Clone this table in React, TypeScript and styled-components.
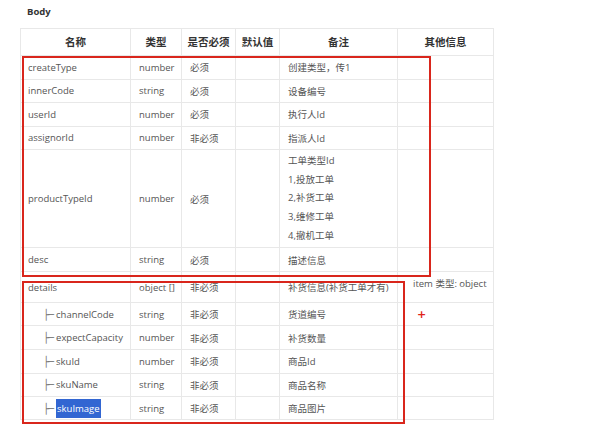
import React from "react";
import styled, { createGlobalStyle } from "styled-components";

const Global = createGlobalStyle`
  html, body { margin: 0; padding: 0; background: #fff; }
  body { font-family: "Open Sans", "Noto Sans CJK SC", sans-serif; }
`;

const Page = styled.div`
  position: relative;
  width: 598px;
  height: 436px;
  padding: 5px 0 0 20px;
  box-sizing: border-box;
  overflow: hidden;
`;

const Title = styled.div`
  font-family: "Open Sans", "Noto Sans CJK SC", sans-serif;
  font-weight: 700;
  font-size: 9.5px;
  color: #333;
  padding-left: 7px;
  height: 23px;
  line-height: 14px;
`;

const Table = styled.table`
  border-collapse: collapse;
  table-layout: fixed;
  width: 473px;
  font-size: 9.5px;
  color: #555;
`;

const Th = styled.th`
  border: 1px solid #e8e8e8;
  font-weight: 600;
  font-size: 10.5px;
  color: #333;
  text-align: center;
  padding: 0;
  font-family: "Noto Sans CJK SC", sans-serif;
`;

const Row = styled.tr<{ $h: number }>`
  height: ${(p) => p.$h}px;
`;

const Td = styled.td<{ $top?: boolean }>`
  border: 1px solid #e8e8e8;
  padding: ${(p) => (p.$top ? "4px 4px 0 15px" : "0 8px")};
  vertical-align: ${(p) => (p.$top ? "top" : "middle")};
  white-space: nowrap;
  overflow: visible;
  font-family: "Open Sans", "Noto Sans CJK SC", sans-serif;
`;

const NameTd = styled(Td)`
  padding-left: 7px;
`;

const Tree = styled.span`
  color: #777;
  margin-left: 15px;
  margin-right: 3px;
  font-size: 10px;
  font-family: "DejaVu Sans Mono", monospace;
  letter-spacing: -1px;
`;

const Selected = styled.span`
  background: #3266d2;
  color: #fff;
  padding: 3px 1px;
`;

const Line = styled.div`
  height: 18.7px;
  line-height: 18.7px;
`;

const Plus = styled.span`
  display: inline-block;
  color: #e0241a;
  font-weight: 700;
  margin-left: 11px;
  font-size: 11px;
  font-family: "DejaVu Sans", sans-serif;
`;

const RedBox = styled.div<{ $l: number; $t: number; $w: number; $h: number }>`
  position: absolute;
  left: ${(p) => p.$l}px;
  top: ${(p) => p.$t}px;
  width: ${(p) => p.$w}px;
  height: ${(p) => p.$h}px;
  border: 2px solid #d9261c;
  box-sizing: border-box;
  pointer-events: none;
`;

type R = { name: React.ReactNode; type: string; req: string; note: React.ReactNode; h: number; other?: React.ReactNode; tree?: boolean };

const rows: R[] = [
  { name: "createType", type: "number", req: "必须", note: "创建类型，传1", h: 24.2 },
  { name: "innerCode", type: "string", req: "必须", note: "设备编号", h: 23.6 },
  { name: "userId", type: "number", req: "必须", note: "执行人Id", h: 23.4 },
  { name: "assignorId", type: "number", req: "非必须", note: "指派人Id", h: 23.6 },
  {
    name: "productTypeId",
    type: "number",
    req: "必须",
    note: (
      <>
        <Line>工单类型Id</Line>
        <Line>1,投放工单</Line>
        <Line>2,补货工单</Line>
        <Line>3,维修工单</Line>
        <Line>4,撤机工单</Line>
      </>
    ),
    h: 98,
  },
  { name: "desc", type: "string", req: "必须", note: "描述信息", h: 24 },
  { name: "details", type: "object []", req: "非必须", note: "补货信息(补货工单才有)", h: 30.7, other: "item 类型: object" },
  { name: "channelCode", type: "string", req: "非必须", note: "货道编号", h: 23.3, tree: true, other: <Plus>+</Plus> },
  { name: "expectCapacity", type: "number", req: "非必须", note: "补货数量", h: 23.7, tree: true },
  { name: "skuId", type: "number", req: "非必须", note: "商品Id", h: 23.7, tree: true },
  { name: "skuName", type: "string", req: "非必须", note: "商品名称", h: 23.3, tree: true },
  { name: <Selected>skuImage</Selected>, type: "string", req: "非必须", note: "商品图片", h: 23.3, tree: true },
];

export default function App() {
  return (
    <Page>
      <Global />
      <Title>Body</Title>
      <Table>
        <colgroup>
          <col style={{ width: 110 }} />
          <col style={{ width: 51 }} />
          <col style={{ width: 54 }} />
          <col style={{ width: 44 }} />
          <col style={{ width: 118 }} />
          <col style={{ width: 96 }} />
        </colgroup>
        <thead>
          <Row $h={26.5}>
            <Th>名称</Th>
            <Th>类型</Th>
            <Th>是否必须</Th>
            <Th>默认值</Th>
            <Th>备注</Th>
            <Th>其他信息</Th>
          </Row>
        </thead>
        <tbody>
          {rows.map((r, i) => (
            <Row $h={r.h} key={i}>
              <NameTd>
                {r.tree && <Tree>├─</Tree>}
                {r.name}
              </NameTd>
              <Td>{r.type}</Td>
              <Td>{r.req}</Td>
              <Td></Td>
              <Td>{r.note}</Td>
              <Td $top={i === 6}>{r.other}</Td>
            </Row>
          ))}
        </tbody>
      </Table>
      <RedBox $l={22} $t={56} $w={409} $h={221} />
      <RedBox $l={22} $t={281} $w={383} $h={143} />
    </Page>
  );
}
